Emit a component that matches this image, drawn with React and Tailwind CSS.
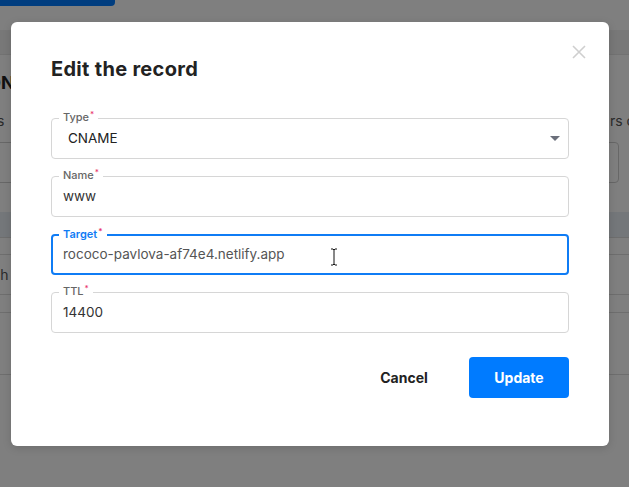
import React from "react";

const fields = [
  { label: "Type", value: "CNAME", select: true },
  { label: "Name", value: "www" },
  { label: "Target", value: "rococo-pavlova-af74e4.netlify.app", focused: true },
  { label: "TTL", value: "14400" },
];

function Field({ label, value, select, focused }) {
  return (
    <div
      className={
        "relative h-[41px] rounded-[4px] flex items-center " +
        (focused ? "border-2 border-[#0f7cf5] pl-[10px]" : "border border-[#d6d6d6] pl-[11px]")
      }
    >
      <span
        className={
          "absolute -top-[8px] bg-white px-[4px] text-[11px] leading-[13px] " +
          (focused ? "text-[#0f7cf5] font-semibold left-[6px]" : "text-[#666] font-medium left-[7px]")
        }
      >
        {label}
        <sup className="text-[#e8336b] text-[8px] ml-[1px] -top-[4px]">*</sup>
      </span>
      <span
        className={
          "text-[13.5px] " +
          (select ? "pl-[5px] text-[#222]" : focused ? "text-[#555]" : "text-[#333]")
        }
      >
        {value}
      </span>
      {select && (
        <svg className="absolute right-[8px] top-[17px]" width="10" height="5" viewBox="0 0 10 5">
          <path d="M0 0 L10 0 L5 5 Z" fill="#6b6f7b" />
        </svg>
      )}
      {focused && (
        <svg className="absolute left-[277px] top-[12px]" width="8" height="18" viewBox="0 0 8 18">
          <path d="M1 1h2l1 1 1-1h2M4 2v14M1 17h2l1-1 1 1h2" stroke="#fff" strokeWidth="2.5" fill="none" />
          <path d="M1 1h2l1 1 1-1h2M4 2v14M1 17h2l1-1 1 1h2" stroke="#111" strokeWidth="1" fill="none" />
        </svg>
      )}
    </div>
  );
}

export default function App() {
  return (
    <div className="relative w-[629px] h-[487px] overflow-hidden bg-white font-['Inter',sans-serif]">
      {/* page underneath */}
      <div className="h-[6px] w-[115px] bg-[#007bff] rounded-br-[4px]" />
      <div className="mt-[24px] h-[25px] bg-[#f0f0f0] border-b border-[#e4e4e4]" />
      <h2 className="mt-[17px] -ml-[12px] text-[18px] leading-[22px] font-bold text-[#222]">DNS records</h2>
      <div className="mt-[18px] flex justify-between text-[14px] leading-[18px] text-[#555]">
        <span className="-ml-[50px]">Records</span>
        <span className="w-[19px] overflow-hidden whitespace-nowrap">rs can</span>
      </div>
      <div className="mt-[12px] -ml-[10px] w-[629px] h-[41px] border border-[#cfcfcf] rounded-[4px]" />
      <div className="mt-[29px] h-[26px] bg-[#e8eef4] border-b border-[#dcdcdc]" />
      <div className="h-[17px] border-b border-[#dcdcdc]" />
      <div className="h-[40px] flex items-center border-b border-[#dcdcdc] text-[14px] text-[#555]">
        <span className="-ml-[38px]">Search</span>
      </div>
      <div className="h-[18px] border-b border-[#dcdcdc]" />
      <div className="h-[62px] border-b border-[#dcdcdc]" />

      {/* overlay */}
      <div className="absolute inset-0 bg-black/50" />

      {/* modal */}
      <div className="absolute left-[11px] top-[22px] w-[598px] h-[424px] bg-white rounded-[6px] shadow-[0_2px_8px_rgba(0,0,0,0.15)] px-[40px] pt-[35px]">
        <button className="absolute right-[23px] top-[23px]">
          <svg width="14" height="14" viewBox="0 0 14 14">
            <path d="M1 1L13 13M13 1L1 13" stroke="#cfcfcf" strokeWidth="1.6" />
          </svg>
        </button>
        <h1 className="text-[20px] leading-[25px] font-bold tracking-[0.3px] text-[#222]">Edit the record</h1>
        <div className="mt-[36px] flex flex-col gap-[17px]">
          {fields.map((f) => (
            <Field key={f.label} {...f} />
          ))}
        </div>
        <div className="mt-[24px] flex justify-end">
          <button className="w-[100px] h-[41px] mr-[15px] text-[14px] font-bold text-[#222]">Cancel</button>
          <button className="w-[100px] h-[41px] rounded-[4px] bg-[#007bff] text-white text-[14px] font-bold">
            Update
          </button>
        </div>
      </div>
    </div>
  );
}
